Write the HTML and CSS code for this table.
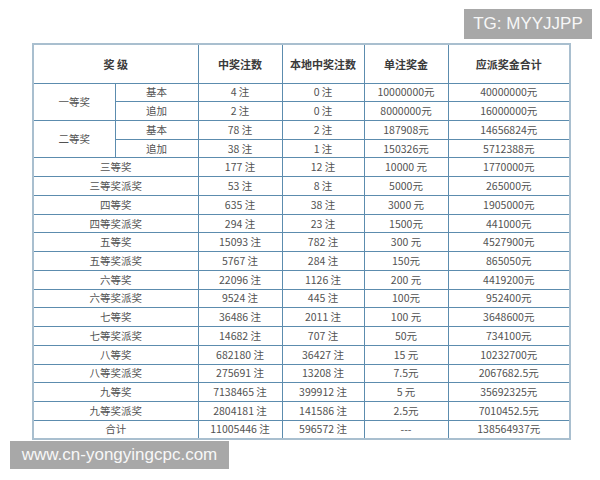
FILE: index.html
```html
<!DOCTYPE html>
<html lang="zh-CN">
<head>
<meta charset="utf-8">
<title>开奖公告</title>
<link rel="stylesheet" href="styles.css">
</head>
<body>
<div class="page">
  <table class="prize">
    <colgroup>
      <col class="c1"><col class="c2"><col class="c3"><col class="c4"><col class="c5"><col class="c6">
    </colgroup>
    <thead>
      <tr><th colspan="2">奖 级</th><th>中奖注数</th><th>本地中奖注数</th><th>单注奖金</th><th>应派奖金合计</th></tr>
    </thead>
    <tbody>
      <tr><td rowspan="2">一等奖</td><td>基本</td><td>4 注</td><td>0 注</td><td>10000000元</td><td>40000000元</td></tr>
      <tr><td>追加</td><td>2 注</td><td>0 注</td><td>8000000元</td><td>16000000元</td></tr>
      <tr><td rowspan="2">二等奖</td><td>基本</td><td>78 注</td><td>2 注</td><td>187908元</td><td>14656824元</td></tr>
      <tr><td>追加</td><td>38 注</td><td>1 注</td><td>150326元</td><td>5712388元</td></tr>
      <tr><td colspan="2">三等奖</td><td>177 注</td><td>12 注</td><td>10000 元</td><td>1770000元</td></tr>
      <tr><td colspan="2">三等奖派奖</td><td>53 注</td><td>8 注</td><td>5000元</td><td>265000元</td></tr>
      <tr><td colspan="2">四等奖</td><td>635 注</td><td>38 注</td><td>3000 元</td><td>1905000元</td></tr>
      <tr><td colspan="2">四等奖派奖</td><td>294 注</td><td>23 注</td><td>1500元</td><td>441000元</td></tr>
      <tr><td colspan="2">五等奖</td><td>15093 注</td><td>782 注</td><td>300 元</td><td>4527900元</td></tr>
      <tr><td colspan="2">五等奖派奖</td><td>5767 注</td><td>284 注</td><td>150元</td><td>865050元</td></tr>
      <tr><td colspan="2">六等奖</td><td>22096 注</td><td>1126 注</td><td>200 元</td><td>4419200元</td></tr>
      <tr><td colspan="2">六等奖派奖</td><td>9524 注</td><td>445 注</td><td>100元</td><td>952400元</td></tr>
      <tr><td colspan="2">七等奖</td><td>36486 注</td><td>2011 注</td><td>100 元</td><td>3648600元</td></tr>
      <tr><td colspan="2">七等奖派奖</td><td>14682 注</td><td>707 注</td><td>50元</td><td>734100元</td></tr>
      <tr><td colspan="2">八等奖</td><td>682180 注</td><td>36427 注</td><td>15 元</td><td>10232700元</td></tr>
      <tr><td colspan="2">八等奖派奖</td><td>275691 注</td><td>13208 注</td><td>7.5元</td><td>2067682.5元</td></tr>
      <tr><td colspan="2">九等奖</td><td>7138465 注</td><td>399912 注</td><td>5 元</td><td>35692325元</td></tr>
      <tr><td colspan="2">九等奖派奖</td><td>2804181 注</td><td>141586 注</td><td>2.5元</td><td>7010452.5元</td></tr>
      <tr><td colspan="2">合计</td><td>11005446 注</td><td>596572 注</td><td>---</td><td>138564937元</td></tr>
    </tbody>
  </table>
  <div class="mark mark-tg">TG: MYYJJPP</div>
  <div class="mark mark-url">www.cn-yongyingcpc.com</div>
</div>
</body>
</html>
```

FILE: styles.css
```css
html, body {
  margin: 0;
  padding: 0;
  background: #ffffff;
}

.page {
  position: relative;
  width: 600px;
  height: 480px;
  overflow: hidden;
  padding: 43px 0 0 32px;
  box-sizing: border-box;
}

.prize {
  border-collapse: collapse;
  table-layout: fixed;
  width: 537px;
  border: 2px solid #a9bfcf;
  font-family: "Noto Sans CJK SC", "Noto Sans", sans-serif;
  font-size: 10.5px;
  color: #525252;
}

.c1 { width: 82px; }
.c2 { width: 83px; }
.c3 { width: 84px; }
.c4 { width: 82px; }
.c5 { width: 84px; }
.c6 { width: 122px; }

.prize th,
.prize td {
  border: 1px solid #5c8cae;
  text-align: center;
  padding: 0;
  line-height: 14px;
  white-space: nowrap;
}

.prize thead tr { height: 39px; }
.prize th {
  font-size: 11px;
  font-weight: bold;
  color: #3a3a3a;
}

.prize tbody tr { height: 18.74px; }

.mark {
  position: absolute;
  background: #a8a8a8;
  color: #f7f7f7;
  font-family: "Liberation Sans", Arial, sans-serif;
  font-size: 17px;
  display: flex;
  align-items: center;
  justify-content: center;
}

.mark-tg {
  left: 464px;
  top: 9px;
  width: 128px;
  height: 30px;
}

.mark-url {
  left: 10px;
  top: 441px;
  width: 219px;
  height: 28px;
}
```
